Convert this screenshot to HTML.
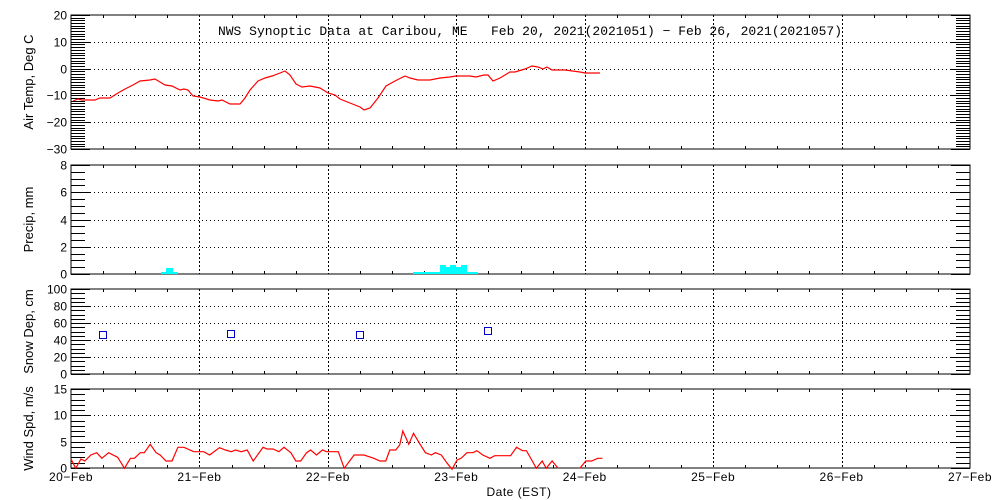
<!DOCTYPE html>
<html><head><meta charset="utf-8"><style>
html,body{margin:0;padding:0;background:#fff;width:1000px;height:500px;overflow:hidden}
svg text{font-family:"Liberation Sans",sans-serif;font-size:12px;fill:#000}
</style></head><body>
<svg id="s" width="1000" height="500" xmlns="http://www.w3.org/2000/svg" shape-rendering="crispEdges"></svg>
<script>
const s=document.getElementById('s');let h='';
const L=71,R=970,D=(R-L)/7;
const P=[{t:15,b:149,min:-30,max:20,maj:10,mn:1,lab:'Air Temp, Deg C'},
{t:165,b:274,min:0,max:8,maj:2,mn:0.5,lab:'Precip, mm'},
{t:289,b:374,min:0,max:100,maj:20,mn:5,lab:'Snow Dep, cm'},
{t:389,b:468,min:0,max:15,maj:5,mn:1,lab:'Wind Spd, m/s'}];
P.forEach(p=>{
 const Y=v=>p.b-(v-p.min)/(p.max-p.min)*(p.b-p.t);p.Y=Y;
 h+=`<rect x="${L}" y="${p.t}" width="${R-L}" height="${p.b-p.t}" fill="none" stroke="#000" stroke-width="1.3"/>`;
 for(let v=p.min;v<=p.max+1e-6;v+=p.mn){const y=Math.round(Y(v))+.5;const maj=Math.abs(v/p.maj-Math.round(v/p.maj))<1e-6;
  const len=maj?19:14;h+=`<line x1="${L}" x2="${L+len}" y1="${y}" y2="${y}" stroke="#000"/><line x1="${R-len}" x2="${R}" y1="${y}" y2="${y}" stroke="#000"/>`;
  if(maj){h+=`<text x="${L-4}" y="${y+4}" text-anchor="end">${v<0?'−'+(-v):v}</text>`;
   if(v>p.min&&v<p.max)h+=`<line x1="${L+19}" x2="${R-19}" y1="${y}" y2="${y}" stroke="#000" stroke-dasharray="1,3"/>`;}}
 for(let i=1;i<28;i++){const x=Math.round(L+i*D/4)+.5;if(i%4==0)h+=`<line x1="${x}" x2="${x}" y1="${p.t}" y2="${p.b}" stroke="#000" stroke-dasharray="2,2"/>`;
  else h+=`<line x1="${x}" x2="${x}" y1="${p.t}" y2="${p.t+3}" stroke="#000"/><line x1="${x}" x2="${x}" y1="${p.b-3}" y2="${p.b}" stroke="#000"/>`;}
 const cy=(p.t+p.b)/2;h+=`<text transform="translate(33,${cy}) rotate(-90)" text-anchor="middle" style="font-size:13px">${p.lab}</text>`;
});
h+=`<text x="530" y="35" text-anchor="middle" style="font-family:'Liberation Mono',monospace;font-size:13px">NWS Synoptic Data at Caribou, ME &#160;&#160;Feb 20, 2021(2021051) − Feb 26, 2021(2021057)</text>`;
const T=[[73,101],[78,99],[82,100],[95,100],[100,98],[110,98],[118,93],[125,89],[133,85],[140,81],[150,80],[155,79],[160,82],[165,85],[172,86],[180,90],[184,89],[188,90],[193,96],[200,97],[210,100],[218,101],[222,100],[230,104],[240,104],[245,98],[250,90],[258,81],[265,78],[272,76],[280,73],[285,71],[290,75],[296,84],[302,87],[310,86],[320,88],[328,93],[335,95],[340,99],[350,103],[360,107],[364,110],[370,108],[378,98],[386,86],[395,81],[405,76],[410,78],[418,80],[430,80],[440,78],[450,77],[456,76],[470,76],[476,77],[484,75],[488,75],[493,81],[500,78],[510,72],[515,72],[525,69],[532,66],[538,67],[543,69],[547,67],[552,70],[565,70],[580,72],[585,73],[600,73]];
h+=`<polyline fill="none" stroke="#f00" stroke-width="1.2" shape-rendering="auto" points="${T.map(a=>a.join(',')).join(' ')}"/>`;
const W=[[180,237],[192,265],[205,237],[215,243],[230,225],[245,218],[258,235],[275,218],[298,232],[315,265],[330,235],[340,235],[355,218],[365,218],[380,193],[395,218],[405,225],[420,243],[435,243],[450,202],[465,202],[490,215],[505,215],[515,215],[530,225],[555,203],[570,210],[585,215],[595,210],[610,215],[625,210],[640,243],[665,202],[675,207],[690,207],[705,215],[718,202],[735,218],[748,243],[760,243],[775,218],[785,210],[800,225],[815,210],[825,215],[840,215],[855,215],[870,265],[895,225],[920,225],[945,235],[960,243],[975,243],[985,210],[1000,210],[1010,195],[1018,153],[1033,193],[1045,160],[1060,190],[1075,218],[1090,225],[1100,218],[1115,225],[1130,250],[1142,268],[1155,240],[1165,235],[1180,218],[1195,218],[1205,212],[1220,225],[1238,235],[1250,227],[1270,227],[1290,227],[1305,202],[1320,212],[1330,212],[1345,243],[1355,265],[1370,243],[1380,265],[1395,243],[1410,265]];
const W2=[[1465,265],[1480,243],[1495,243],[1510,235],[1522,235]];
const cv=a=>a.map(q=>(71+(q[0]-180)*0.396).toFixed(1)+','+(380+q[1]/3).toFixed(1)).join(' ');
h+=`<polyline fill="none" stroke="#f00" stroke-width="1.2" shape-rendering="auto" points="${cv(W)}"/><polyline fill="none" stroke="#f00" stroke-width="1.2" shape-rendering="auto" points="${cv(W2)}"/>`;
h+=`<g fill="#0ff"><rect x="161" y="272" width="17" height="2"/><rect x="166" y="268" width="7" height="5"/><rect x="413" y="272" width="65" height="2"/><rect x="440" y="265" width="27" height="8"/></g><g fill="#fff"><rect x="446" y="265" width="4" height="2"/><rect x="456" y="265" width="5" height="2"/></g>`;
[[103,335],[231,334],[360,335],[488,331]].forEach(q=>h+=`<rect x="${q[0]-3.5}" y="${q[1]-3.5}" width="7" height="7" fill="none" stroke="#00c" stroke-width="1.2"/>`);
['20','21','22','23','24','25','26','27'].forEach((d,i)=>h+=`<text x="${L+i*D}" y="481" text-anchor="middle" style="letter-spacing:0.5px">${d}−Feb</text>`);
h+=`<text x="519" y="496" text-anchor="middle" style="letter-spacing:0.5px">Date (EST)</text>`;
s.innerHTML=h;
</script>
</body></html>
